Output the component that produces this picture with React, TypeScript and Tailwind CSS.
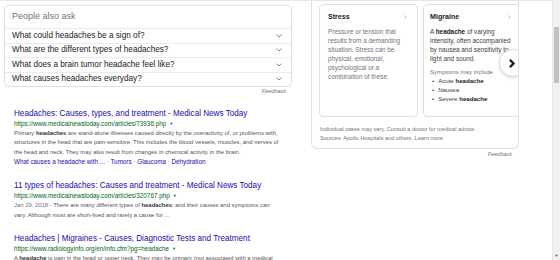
import React from 'react';

const questions = [
  'What could headaches be a sign of?',
  'What are the different types of headaches?',
  'What does a brain tumor headache feel like?',
  'What causes headaches everyday?',
];

function ChevronDown() {
  return (
    <svg width="6" height="4" viewBox="0 0 6 4" className="shrink-0">
      <path d="M0.6 0.6 L3 3 L5.4 0.6" fill="none" stroke="#70757a" strokeWidth="0.9" />
    </svg>
  );
}

function ChevronRight({ size = 4, color = '#9aa0a6', width = 0.8 }: { size?: number; color?: string; width?: number }) {
  return (
    <svg width={size * 0.6} height={size} viewBox="0 0 6 10">
      <path d="M1 1 L5 5 L1 9" fill="none" stroke={color} strokeWidth={width * 2} />
    </svg>
  );
}

function UrlLine({ url }: { url: string }) {
  return (
    <div className="flex items-center gap-[3px] text-[6.3px] leading-[10px] text-[#006621]">
      <span>{url}</span>
      <span className="text-[4px]">▼</span>
    </div>
  );
}

function Result({ title, url, children, className = '' }: { title: string; url: string; children: React.ReactNode; className?: string }) {
  return (
    <div className={className}>
      <div className="text-[8.15px] leading-[10px] text-[#1a0dab] whitespace-nowrap">{title}</div>
      <UrlLine url={url} />
      <div className="text-[5.9px] leading-[9.4px] text-[#545454] whitespace-nowrap">{children}</div>
    </div>
  );
}

export default function App() {
  return (
    <div className="w-[560px] h-[260px] flex overflow-hidden bg-white font-['Liberation_Sans',Arial,sans-serif]">
      <div className="w-[552px] h-full border-t border-[#e6e6e6] flex">
        {/* left column */}
        <div className="w-[311px] shrink-0">
          <div className="pl-[4px] pt-[4px]">
            <div className="w-[288px] rounded-[4px] border border-[#dfe1e5]">
              <div className="h-[22px] px-[7px] flex items-center text-[9px] text-[#70757a]">People also ask</div>
              {questions.map((q) => (
                <div key={q} className="h-[14.5px] border-t border-[#ebebeb] px-[7px] pr-[9px] flex items-center justify-between text-[8.2px] text-[#222]">
                  <span>{q}</span>
                  <ChevronDown />
                </div>
              ))}
            </div>
            <div className="w-[288px] pr-[6px] text-right text-[5.5px] leading-[8px] italic text-[#70757a]">Feedback</div>
          </div>

          <div className="pl-[14px]">
            <Result className="mt-[14px]" title="Headaches: Causes, types, and treatment - Medical News Today" url="https://www.medicalnewstoday.com/articles/73936.php">
              Primary <b className="text-[#333]">headaches</b> are stand-alone illnesses caused directly by the overactivity of, or problems with,
              <br />
              structures in the head that are pain-sensitive. This includes the blood vessels, muscles, and nerves of
              <br />
              the head and neck. They may also result from changes in chemical activity in the brain.
            </Result>
            <div className="text-[6.3px] leading-[9.4px] text-[#1a0dab] whitespace-nowrap">
              What causes a headache with ... <span className="text-[#70757a]">·</span> Tumors <span className="text-[#70757a]">·</span> Glaucoma <span className="text-[#70757a]">·</span> Dehydration
            </div>

            <Result className="mt-[14.5px]" title="11 types of headaches: Causes and treatment - Medical News Today" url="https://www.medicalnewstoday.com/articles/320767.php">
              <span className="text-[#70757a]">Jan 29, 2018 - </span>There are many different types of <b className="text-[#333]">headaches</b>, and their causes and symptoms can
              <br />
              vary. Although most are short-lived and rarely a cause for ...
            </Result>

            <Result className="mt-[14px]" title="Headaches | Migraines - Causes, Diagnostic Tests and Treatment" url="https://www.radiologyinfo.org/en/info.cfm?pg=headache">
              A <b className="text-[#333]">headache</b> is pain in the head or upper neck. They may be primary (not associated with a medical
            </Result>
          </div>
        </div>

        {/* right column */}
        <div className="w-[208px] shrink-0">
          <div className="relative overflow-hidden border-x border-b border-[#dfe1e5] rounded-b-[6px] pl-[7px] pt-[3px] pb-[5px]">
            <div className="flex gap-[5px] w-[300px]">
              <div className="w-[99px] h-[113px] shrink-0 rounded-[4px] border border-[#dfe1e5] px-[8px] pt-[8px]">
                <div className="flex items-center justify-between pr-[3px]">
                  <span className="text-[7.1px] leading-[8px] font-bold text-[#222]">Stress</span>
                  <ChevronRight />
                </div>
                <div className="mt-[6px] text-[6.4px] leading-[9px] text-[#70757a]">
                  Pressure or tension that<br />
                  results from a demanding<br />
                  situation. Stress can be<br />
                  physical, emotional,<br />
                  psychological or a<br />
                  combination of these.
                </div>
              </div>
              <div className="w-[99px] h-[113px] shrink-0 rounded-[4px] border border-[#dfe1e5] px-[6px] pt-[8px]">
                <div className="flex items-center justify-between pr-[5px]">
                  <span className="text-[7.1px] leading-[8px] font-bold text-[#222]">Migraine</span>
                  <ChevronRight />
                </div>
                <div className="mt-[6px] text-[6.4px] leading-[9px] text-[#3c4043] whitespace-nowrap">
                  A <b className="text-[#222]">headache</b> of varying<br />
                  intensity, often accompanied<br />
                  by nausea and sensitivity to<br />
                  light and sound.
                </div>
                <div className="mt-[4px] text-[6.1px] leading-[9px] text-[#70757a]">Symptoms may include</div>
                <ul className="text-[6.1px] leading-[9.2px] text-[#3c4043]">
                  <li className="flex gap-[4px] pl-[2px]"><span>•</span><span>Acute <b className="text-[#222]">headache</b></span></li>
                  <li className="flex gap-[4px] pl-[2px]"><span>•</span><span>Nausea</span></li>
                  <li className="flex gap-[4px] pl-[2px]"><span>•</span><span>Severe <b className="text-[#222]">headache</b></span></li>
                </ul>
              </div>
            </div>
            <div className="mt-[8px] pl-[1px] text-[5.6px] leading-[9px] text-[#70757a]">
              Individual cases may vary. Consult a doctor for medical advice.<br />
              Sources: Apollo Hospitals and others. Learn more
            </div>
            <div className="absolute left-[187px] top-[48px] w-[28px] h-[28px] rounded-full bg-white border border-[#dadce0] shadow-[0_1px_3px_rgba(0,0,0,0.15)] flex items-center justify-center pr-[2px]">
              <ChevronRight size={9} color="#202124" width={1.3} />
            </div>
          </div>
          <div className="pr-[7px] pt-[1px] text-right text-[5.5px] leading-[8px] italic text-[#70757a]">Feedback</div>
        </div>
      </div>

      {/* scrollbar */}
      <div className="w-[8px] h-full bg-[#f1f1f1] border-l border-[#e8e8e8] flex flex-col items-center">
        <div className="mt-[27px] w-[5px] h-[56px] bg-[#c1c1c1]" />
        <div className="mt-auto mb-[2px] text-[4px] leading-[4px] text-[#505050]">▼</div>
      </div>
    </div>
  );
}
